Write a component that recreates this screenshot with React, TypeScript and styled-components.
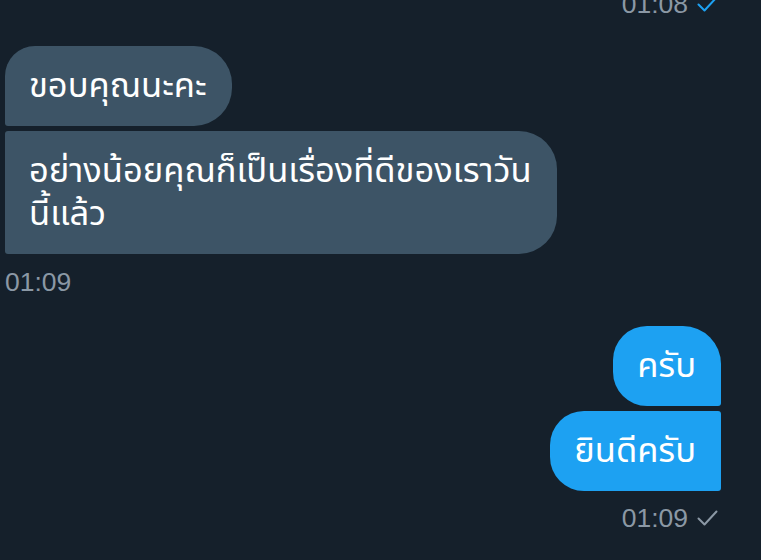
import React from "react";
import styled, { createGlobalStyle } from "styled-components";

const Global = createGlobalStyle`
  html, body { margin: 0; padding: 0; background: #15202b; }
  body { overflow: hidden; }
`;

const Screen = styled.div`
  width: 761px;
  height: 560px;
  overflow: hidden;
  background: #15202b;
  box-sizing: border-box;
  padding: 0 40px 0 5px;
  display: flex;
  flex-direction: column;
  font-family: "Noto Sans Thai", "Noto Sans", "Liberation Sans", sans-serif;
`;

const Meta = styled.div<{ $side: "left" | "right"; $top: number }>`
  display: flex;
  align-items: center;
  gap: 9px;
  align-self: ${(p) => (p.$side === "right" ? "flex-end" : "flex-start")};
  margin-top: ${(p) => p.$top}px;
  margin-right: ${(p) => (p.$side === "right" ? "3px" : "0")};
  font-family: "Liberation Sans", Arial, sans-serif;
  font-size: 26.5px;
  line-height: 30px;
  color: #8b98a5;
`;

const Group = styled.div<{ $side: "left" | "right"; $top: number }>`
  display: flex;
  flex-direction: column;
  gap: 5px;
  align-items: ${(p) => (p.$side === "right" ? "flex-end" : "flex-start")};
  margin-top: ${(p) => p.$top}px;
`;

const Bubble = styled.div<{ $mine?: boolean; $radius: string }>`
  box-sizing: border-box;
  padding: 19px 25px 18px 24px;
  background: ${(p) => (p.$mine ? "#1da1f2" : "#3d5466")};
  color: #ffffff;
  font-size: 34.5px;
  line-height: 43px;
  border-radius: ${(p) => p.$radius};
  white-space: nowrap;
`;

const Check = ({ color }: { color: string }) => (
  <svg width="21" height="16" viewBox="0 0 21 16" fill="none">
    <path d="M1.5 8.5 L7.5 14.5 L19.5 1.5" stroke={color} strokeWidth="2" strokeLinecap="round" strokeLinejoin="round" />
  </svg>
);

export default function App() {
  return (
    <>
      <Global />
      <Screen>
        <Meta $side="right" $top={-11}>
          <span>01:08</span>
          <Check color="#1da1f2" />
        </Meta>
        <Group $side="left" $top={27}>
          <Bubble $radius="30px 38px 38px 3px">ขอบคุณนะคะ</Bubble>
          <Bubble $radius="3px 38px 38px 3px">
            อย่างน้อยคุณก็เป็นเรื่องที่ดีของเราวัน
            <br />
            นี้แล้ว
          </Bubble>
        </Group>
        <Meta $side="left" $top={13}>
          <span>01:09</span>
        </Meta>
        <Group $side="right" $top={29}>
          <Bubble $mine $radius="34px 38px 3px 34px">ครับ</Bubble>
          <Bubble $mine $radius="34px 3px 3px 34px">ยินดีครับ</Bubble>
        </Group>
        <Meta $side="right" $top={12}>
          <span>01:09</span>
          <Check color="#8b98a5" />
        </Meta>
      </Screen>
    </>
  );
}
